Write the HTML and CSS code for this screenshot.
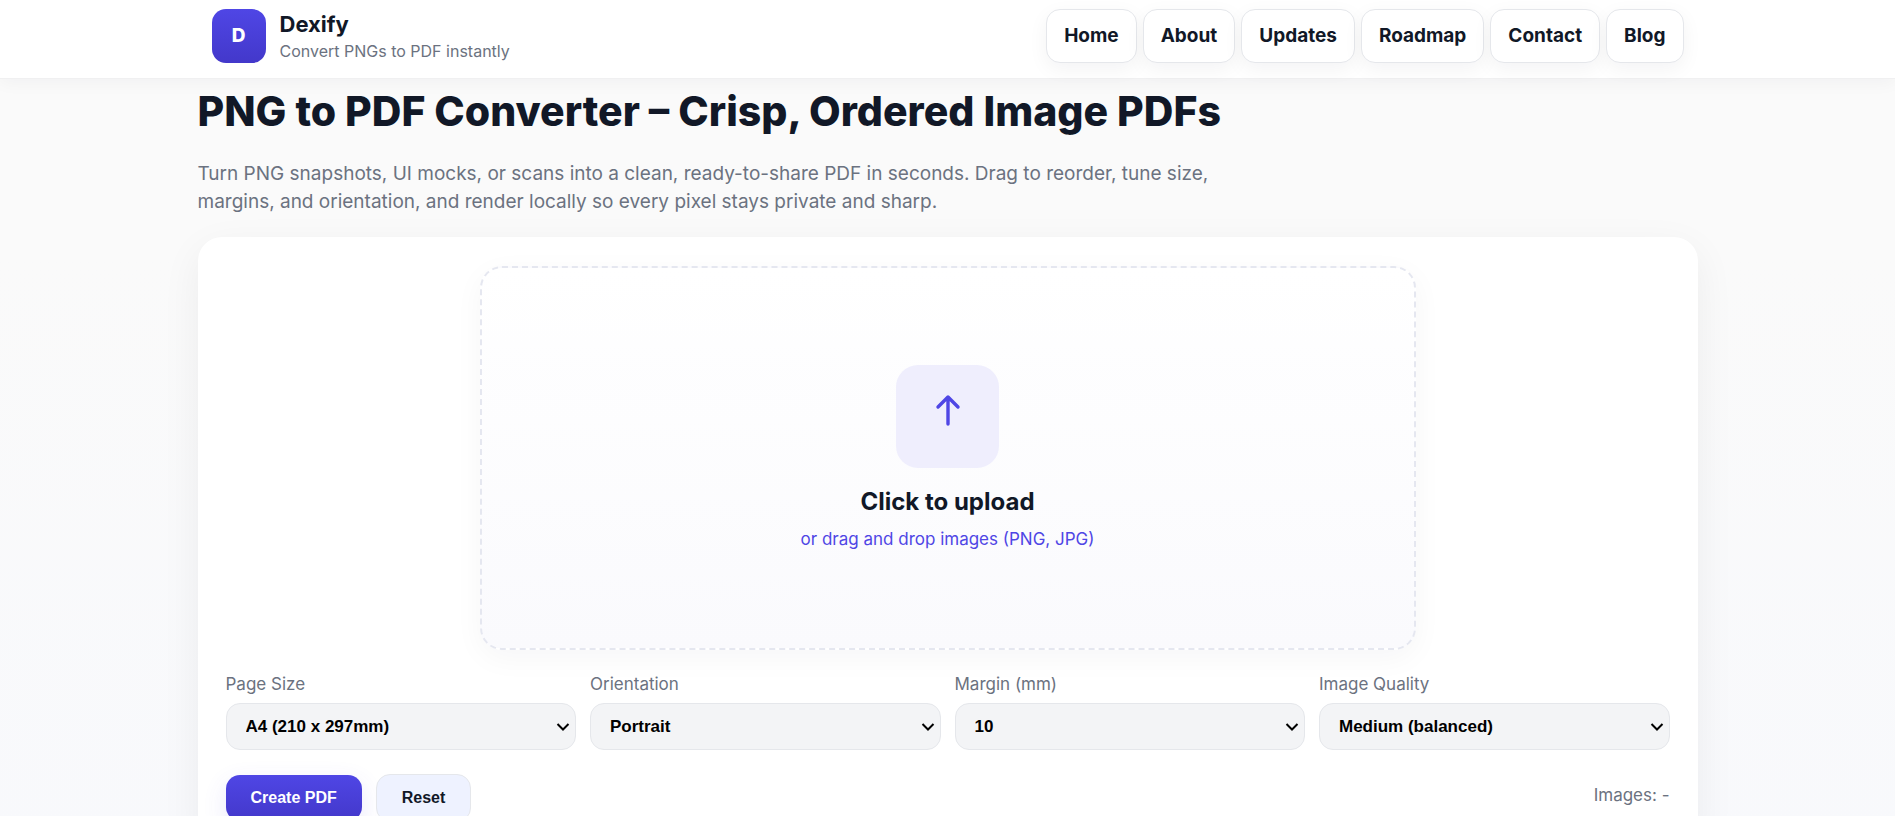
FILE: index.html
```html
<!DOCTYPE html>
<html lang="en">
<head>
  <meta charset="UTF-8">
  <meta name="viewport" content="width=device-width, initial-scale=1.0">
  <title>PNG to PDF Converter | Dexify</title>
  <link rel="stylesheet" href="styles.css">
</head>
<body>
  <header class="site-header">
    <div class="header-inner">
      <div class="brand">
        <div class="logo">D</div>
        <div>
          <div class="brand-name">Dexify</div>
          <div class="brand-tagline">Convert PNGs to PDF instantly</div>
        </div>
      </div>
      <nav class="nav">
        <a href="#">Home</a>
        <a href="#">About</a>
        <a href="#">Updates</a>
        <a href="#">Roadmap</a>
        <a href="#">Contact</a>
        <a href="#">Blog</a>
      </nav>
    </div>
  </header>

  <main class="container">
    <section class="intro">
      <h1>PNG to PDF Converter – Crisp, Ordered Image PDFs</h1>
      <p>Turn PNG snapshots, UI mocks, or scans into a clean, ready-to-share PDF in seconds. Drag to reorder, tune size, margins, and orientation, and render locally so every pixel stays private and sharp.</p>
    </section>

    <section class="card">
      <button type="button" class="dropzone" id="dropzone">
        <span class="upload-icon">
          <svg width="40" height="40" viewBox="0 0 40 40" fill="none" stroke="currentColor" stroke-width="3.4" stroke-linecap="round" stroke-linejoin="round">
            <path d="M20 33V6M10 16L20 6L30 16"/>
          </svg>
        </span>
        <span class="upload-title">Click to upload</span>
        <span class="upload-hint">or drag and drop images (PNG, JPG)</span>
      </button>
      <input type="file" id="fileInput" accept="image/png,image/jpeg" multiple hidden>

      <div class="controls">
        <div class="control">
          <label for="pageSize">Page Size</label>
          <select id="pageSize">
            <option>A4 (210 x 297mm)</option>
            <option>Letter (216 x 279mm)</option>
          </select>
        </div>
        <div class="control">
          <label for="orientation">Orientation</label>
          <select id="orientation">
            <option>Portrait</option>
            <option>Landscape</option>
          </select>
        </div>
        <div class="control">
          <label for="margin">Margin (mm)</label>
          <select id="margin">
            <option>10</option>
            <option>20</option>
          </select>
        </div>
        <div class="control">
          <label for="quality">Image Quality</label>
          <select id="quality">
            <option>Medium (balanced)</option>
            <option>High</option>
          </select>
        </div>
      </div>

      <div class="actions">
        <div class="buttons">
          <button type="button" class="btn btn-primary">Create PDF</button>
          <button type="reset" class="btn btn-secondary">Reset</button>
        </div>
        <div class="count">Images: <span id="imageCount">-</span></div>
      </div>
    </section>
  </main>

  <script>
    document.getElementById('dropzone').addEventListener('click', function () {
      document.getElementById('fileInput').click();
    });
    document.getElementById('fileInput').addEventListener('change', function () {
      document.getElementById('imageCount').textContent = this.files.length || '-';
    });
  </script>
</body>
</html>
```
FILE: styles.css
```css
* {
  box-sizing: border-box;
}
html {
  scrollbar-width: none;
}
body {
  margin: 0;
  min-height: 100vh;
  font-family: Inter, sans-serif;
  color: #111827;
  background: linear-gradient(180deg, #fafafa 0%, #fafafa 30%, #f8f9fc 100%);
}

/* Header */
.site-header {
  position: sticky;
  top: 0;
  z-index: 10;
  background: #ffffff;
  border-bottom: 1px solid #f0f0f1;
  box-shadow: 0 4px 16px rgba(17, 24, 39, 0.04);
}
.header-inner {
  display: flex;
  align-items: center;
  justify-content: space-between;
  max-width: 1500px;
  margin: 0 auto;
  padding: 9px 14px 15px;
}
.brand {
  display: flex;
  align-items: center;
  gap: 14px;
}
.logo {
  display: flex;
  align-items: center;
  justify-content: center;
  width: 54px;
  height: 54px;
  padding-bottom: 2px;
  border-radius: 14px;
  background: linear-gradient(180deg, #4f46e5, #4338ca);
  color: #ffffff;
  font-size: 19px;
  font-weight: 800;
}
.brand-name {
  font-size: 22px;
  font-weight: 700;
  line-height: 30px;
}
.brand-tagline {
  font-size: 16px;
  line-height: 24px;
  color: #6b7280;
}
.nav {
  display: flex;
  gap: 6px;
}
.nav a {
  padding: 14px 17px;
  border: 1px solid #e5e7eb;
  border-radius: 14px;
  background: #ffffff;
  box-shadow: 0 6px 20px rgba(17, 24, 39, 0.05);
  color: #111827;
  font-size: 19px;
  font-weight: 700;
  line-height: 24px;
  text-decoration: none;
}

/* Page */
.container {
  max-width: 1500px;
  margin: 0 auto;
}
.intro {
  padding: 7px 0 21px;
}
.intro h1 {
  margin: 0 0 24px;
  font-size: 41px;
  font-weight: 800;
  line-height: 50px;
}
.intro p {
  max-width: 1040px;
  margin: 0;
  color: #6b7280;
  font-size: 19px;
  line-height: 28px;
}
.card {
  padding: 29px 28px 28px;
  border-radius: 24px;
  background: #ffffff;
  box-shadow: 0 12px 40px rgba(17, 24, 39, 0.06);
}

/* Upload area */
.dropzone {
  display: flex;
  flex-direction: column;
  align-items: center;
  justify-content: center;
  width: 100%;
  max-width: 936px;
  min-height: 384px;
  margin: 0 auto;
  padding: 2px 0 0;
  border: 2px dashed #e5e7f0;
  border-radius: 22px;
  background: linear-gradient(180deg, #ffffff, #fafafd);
  box-shadow: 0 8px 30px rgba(17, 24, 39, 0.04);
  color: #111827;
  font-family: inherit;
  cursor: pointer;
}
.upload-icon {
  display: flex;
  align-items: center;
  justify-content: center;
  width: 103px;
  height: 103px;
  margin-bottom: 18px;
  padding-bottom: 12px;
  border-radius: 22px;
  background: #efeefd;
  color: #4f46e5;
}
.upload-title {
  font-size: 24px;
  font-weight: 700;
  line-height: 32px;
}
.upload-hint {
  margin-top: 7px;
  color: #4f46e5;
  font-size: 17px;
  line-height: 28px;
}

/* Options */
.controls {
  display: grid;
  grid-template-columns: repeat(4, 1fr);
  gap: 14px;
  margin-top: 22px;
}
.control label {
  display: block;
  margin-bottom: 7px;
  color: #6b7280;
  font-size: 17px;
  line-height: 24px;
}
.control select {
  appearance: none;
  width: 100%;
  height: 47px;
  padding: 0 32px 0 19px;
  border: 1px solid #e5e7eb;
  border-radius: 14px;
  background: #f3f4f6 url("data:image/svg+xml,%3Csvg xmlns='http://www.w3.org/2000/svg' width='14' height='10' fill='none' stroke='black' stroke-width='2'%3E%3Cpath d='M1.5 2L7 7.5L12.5 2'/%3E%3C/svg%3E") no-repeat right 5px center;
  color: #000000;
  font-family: "Liberation Sans", Arial, sans-serif;
  font-size: 17px;
  font-weight: 700;
}

/* Actions */
.actions {
  display: flex;
  align-items: flex-start;
  justify-content: space-between;
  margin-top: 24px;
}
.buttons {
  display: flex;
  align-items: center;
  gap: 14px;
}
.btn {
  padding: 14px 25px;
  border: 0;
  border-radius: 14px;
  font-family: "Liberation Sans", Arial, sans-serif;
  font-size: 16px;
  font-weight: 700;
  line-height: 18px;
  cursor: pointer;
}
.btn-primary {
  background: linear-gradient(180deg, #4f46e5, #4338ca);
  box-shadow: 0 8px 24px rgba(79, 70, 229, 0.12);
  color: #ffffff;
}
.btn-secondary {
  border: 1px solid #e5e7eb;
  background: #eef2ff;
  color: #111827;
}
.count {
  padding-top: 9px;
  color: #6b7280;
  font-size: 17px;
  line-height: 24px;
}
```
